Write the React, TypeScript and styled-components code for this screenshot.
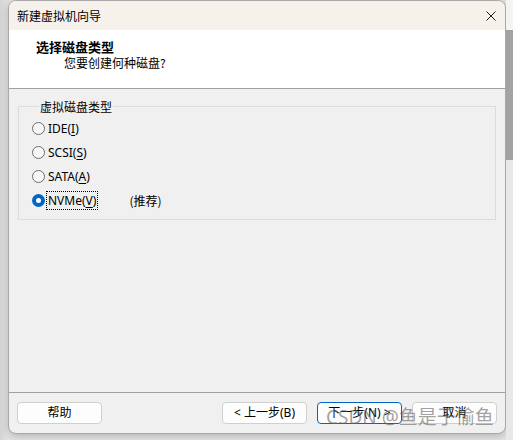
import React from "react";
import styled, { createGlobalStyle } from "styled-components";

const GlobalStyle = createGlobalStyle`
  html, body { margin: 0; padding: 0; }
  body {
    background: #e2e2e2;
    font-family: "Noto Sans", "Noto Sans CJK SC", sans-serif;
    font-size: 12px;
    color: #000;
  }
`;

const Page = styled.div`
  position: relative;
  width: 513px;
  height: 440px;
  overflow: hidden;
  display: flex;
  align-items: flex-start;
  background: linear-gradient(to right, #d4d4d4, #e4e4e4 8px);
`;

const Dialog = styled.div`
  margin-left: 8px;
  width: 498px;
  height: 434px;
  flex-shrink: 0;
  box-sizing: border-box;
  border: 1px solid #a8a8a8;
  border-radius: 8px;
  overflow: hidden;
  display: flex;
  flex-direction: column;
  background: #f0f0f0;
  box-shadow: 0 2px 8px rgba(0, 0, 0, 0.22);
`;

const TitleBar = styled.div`
  height: 29px;
  flex-shrink: 0;
  display: flex;
  align-items: center;
  justify-content: space-between;
  padding: 0 9px 0 8px;
  background: #f7f1eb;
  font-family: "Noto Sans CJK SC", sans-serif;
  font-size: 12px;
`;

const CloseIcon = styled.svg`
  width: 10px;
  height: 10px;
  margin-top: 1px;
`;

const Header = styled.div`
  height: 49px;
  flex-shrink: 0;
  background: #fff;
  border-bottom: 1px solid #a0a0a0;
  padding: 9px 0 0 27px;
  box-sizing: content-box;
  font-family: "Noto Sans CJK SC", sans-serif;
`;

const HeaderTitle = styled.div`
  font-size: 13px;
  font-weight: 700;
  line-height: 16px;
`;

const HeaderSub = styled.div`
  font-size: 12px;
  line-height: 15px;
  padding-left: 28px;
`;

const Body = styled.div`
  flex: 1;
  padding: 10px 9px 0 9px;
`;

const Group = styled.fieldset`
  margin: 0;
  padding: 2px 0 7px 13px;
  border: 1px solid #dcdcdc;
  min-width: 0;
`;

const Legend = styled.legend`
  margin-left: 7px;
  padding: 0 1px;
  font-family: "Noto Sans CJK SC", sans-serif;
  font-size: 12px;
  line-height: 15px;
`;

const RadioRow = styled.div`
  height: 24px;
  display: flex;
  align-items: center;
`;

const RadioCircle = styled.span<{ $checked?: boolean }>`
  width: 13px;
  height: 13px;
  box-sizing: border-box;
  border-radius: 50%;
  flex-shrink: 0;
  display: flex;
  align-items: center;
  justify-content: center;
  border: ${(p) => (p.$checked ? "none" : "1px solid #6e6e6e")};
  background: ${(p) => (p.$checked ? "#0067c0" : "#f6f6f6")};
  &::after {
    content: "";
    display: ${(p) => (p.$checked ? "block" : "none")};
    width: 5px;
    height: 5px;
    border-radius: 50%;
    background: #fff;
  }
`;

const RadioLabel = styled.span<{ $focused?: boolean }>`
  margin-left: 2px;
  padding: 1px 1px;
  line-height: 15px;
  outline: ${(p) => (p.$focused ? "1px dotted #000" : "none")};
  outline-offset: 0;
`;

const Mn = styled.span`
  text-decoration: underline;
  text-underline-offset: 2px;
`;

const Hint = styled.span`
  margin-left: 32px;
  font-family: "Noto Sans CJK SC", sans-serif;
`;

const Footer = styled.div`
  flex-shrink: 0;
  border-top: 1px solid #a0a0a0;
  padding: 9px 8px 9px 8px;
  display: flex;
  align-items: center;
`;

const Button = styled.button<{ $primary?: boolean }>`
  width: 85px;
  height: 22px;
  box-sizing: border-box;
  padding: 0;
  margin: 0;
  border: 1px solid ${(p) => (p.$primary ? "#0067c0" : "#d0d0d0")};
  border-radius: 4px;
  background: #fdfdfd;
  font-family: "Noto Sans", "Noto Sans CJK SC", sans-serif;
  font-size: 12px;
  color: #000;
  line-height: 20px;
`;

const Spacer = styled.div`
  flex: 1;
`;

const ButtonGroup = styled.div`
  display: flex;
  gap: 10px;
`;

const RightStrip = styled.div`
  flex: 1;
  height: 440px;
  display: flex;
  flex-direction: column;
`;

const StripPart = styled.div<{ $h: number; $bg: string }>`
  height: ${(p) => p.$h}px;
  background: ${(p) => p.$bg};
  flex-shrink: 0;
`;

const StripRest = styled.div`
  flex: 1;
  background: #e8e8e8;
`;

const Watermark = styled.div`
  position: absolute;
  left: 326px;
  top: 405px;
  font-family: "Noto Sans", "Noto Sans CJK SC", sans-serif;
  font-size: 19px;
  line-height: 24px;
  color: rgba(100, 100, 100, 0.6);
  white-space: nowrap;
  pointer-events: none;
`;

const options = [
  { pre: "IDE(", key: "I", post: ")" },
  { pre: "SCSI(", key: "S", post: ")" },
  { pre: "SATA(", key: "A", post: ")" },
  { pre: "NVMe(", key: "V", post: ")", checked: true, hint: "(推荐)" },
];

export default function App() {
  return (
    <>
      <GlobalStyle />
      <Page>
        <Dialog>
          <TitleBar>
            <span>新建虚拟机向导</span>
            <CloseIcon viewBox="0 0 10 10">
              <path d="M0.5 0.5 L9.5 9.5 M9.5 0.5 L0.5 9.5" stroke="#1a1a1a" strokeWidth="1" fill="none" />
            </CloseIcon>
          </TitleBar>
          <Header>
            <HeaderTitle>选择磁盘类型</HeaderTitle>
            <HeaderSub>您要创建何种磁盘?</HeaderSub>
          </Header>
          <Body>
            <Group>
              <Legend>虚拟磁盘类型</Legend>
              {options.map((o) => (
                <RadioRow key={o.key}>
                  <RadioCircle $checked={o.checked} />
                  <RadioLabel $focused={o.checked}>
                    {o.pre}
                    <Mn>{o.key}</Mn>
                    {o.post}
                  </RadioLabel>
                  {o.hint && <Hint>{o.hint}</Hint>}
                </RadioRow>
              ))}
            </Group>
          </Body>
          <Footer>
            <Button>帮助</Button>
            <Spacer />
            <ButtonGroup>
              <Button>&lt; 上一步(B)</Button>
              <Button $primary>下一步(N) &gt;</Button>
              <Button>取消</Button>
            </ButtonGroup>
          </Footer>
        </Dialog>
        <RightStrip>
          <StripPart $h={30} $bg="#f4f4f4" />
          <StripPart $h={130} $bg="#a3a3a3" />
          <StripRest />
        </RightStrip>
        <Watermark>CSDN @鱼是于愉鱼</Watermark>
      </Page>
    </>
  );
}
